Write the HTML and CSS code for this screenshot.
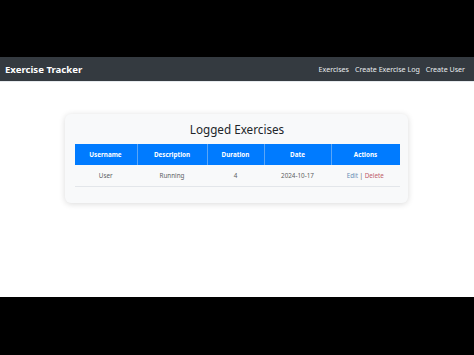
FILE: index.html
```html
<!DOCTYPE html>
<html lang="en">

<head>
    <meta charset="UTF-8">
    <meta name="viewport" content="width=device-width, initial-scale=1.0">
    <title>Exercise Tracker</title>
    <link rel="stylesheet" href="styles.css">
</head>

<body>
    <div class="letterbox"></div>

    <div class="screen">
        <nav class="navbar">
            <a class="brand" href="#">Exercise Tracker</a>
            <div class="nav-links">
                <a href="#">Exercises</a>
                <a href="#">Create Exercise Log</a>
                <a href="#">Create User</a>
            </div>
        </nav>

        <div class="card">
            <h3>Logged Exercises</h3>
            <table class="exercise-table">
                <thead>
                    <tr>
                        <th class="col-user">Username</th>
                        <th class="col-desc">Description</th>
                        <th class="col-dur">Duration</th>
                        <th class="col-date">Date</th>
                        <th>Actions</th>
                    </tr>
                </thead>
                <tbody>
                    <tr>
                        <td>User</td>
                        <td>Running</td>
                        <td>4</td>
                        <td>2024-10-17</td>
                        <td><a class="edit" href="#">Edit</a> | <a class="delete" href="#">Delete</a></td>
                    </tr>
                </tbody>
            </table>
        </div>
    </div>

    <div class="letterbox"></div>
</body>

</html>
```

FILE: styles.css
```css
body {
    font-family: "Noto Sans", "Open Sans", sans-serif;
    background-color: #000;
    margin: 0;
    padding: 0;
}

.letterbox {
    height: 57px;
}

.screen {
    height: 240px;
    background-color: #fff;
    overflow: hidden;
}

.navbar {
    height: 24px;
    background-color: #343a40;
    display: flex;
    align-items: center;
    justify-content: space-between;
    padding: 0 9px 0 5px;
    border-bottom: 1px solid #e6eaee;
}

.brand {
    color: #fff;
    font-weight: bold;
    font-size: 9.6px;
    text-decoration: none;
}

.nav-links {
    display: flex;
    gap: 6px;
}

.nav-links a {
    color: #e9ecef;
    font-size: 7.1px;
    text-decoration: none;
}

.card {
    width: 325px;
    margin: 32px auto 0;
    padding: 8px 8px 16px 10px;
    background-color: #f8f9fa;
    border-radius: 6px;
    box-shadow: 0 1px 6px rgba(0, 0, 0, 0.15);
    position: relative;
    left: -1px;
}

.card h3 {
    margin: 0 0 7px;
    text-align: center;
    font-size: 11.7px;
    font-weight: normal;
    color: #212529;
    line-height: 15px;
}

.exercise-table {
    width: 325px;
    table-layout: fixed;
    border-collapse: collapse;
    font-size: 6.3px;
    text-align: center;
}

.exercise-table th {
    background-color: #007bff;
    color: #fff;
    font-weight: bold;
    height: 21px;
    padding: 0;
    border-left: 1px solid #5aa6f7;
}

.exercise-table th:first-child {
    border-left: none;
}

.col-user { width: 62px; }
.col-desc { width: 69px; }
.col-dur { width: 56px; }
.col-date { width: 66px; }

.exercise-table td {
    height: 21px;
    color: #5c5f63;
    border-bottom: 1px solid #e3e6ea;
    padding: 0;
}

.edit {
    color: #6a8fb5;
    text-decoration: none;
}

.delete {
    color: #c0606a;
    text-decoration: none;
}
```
